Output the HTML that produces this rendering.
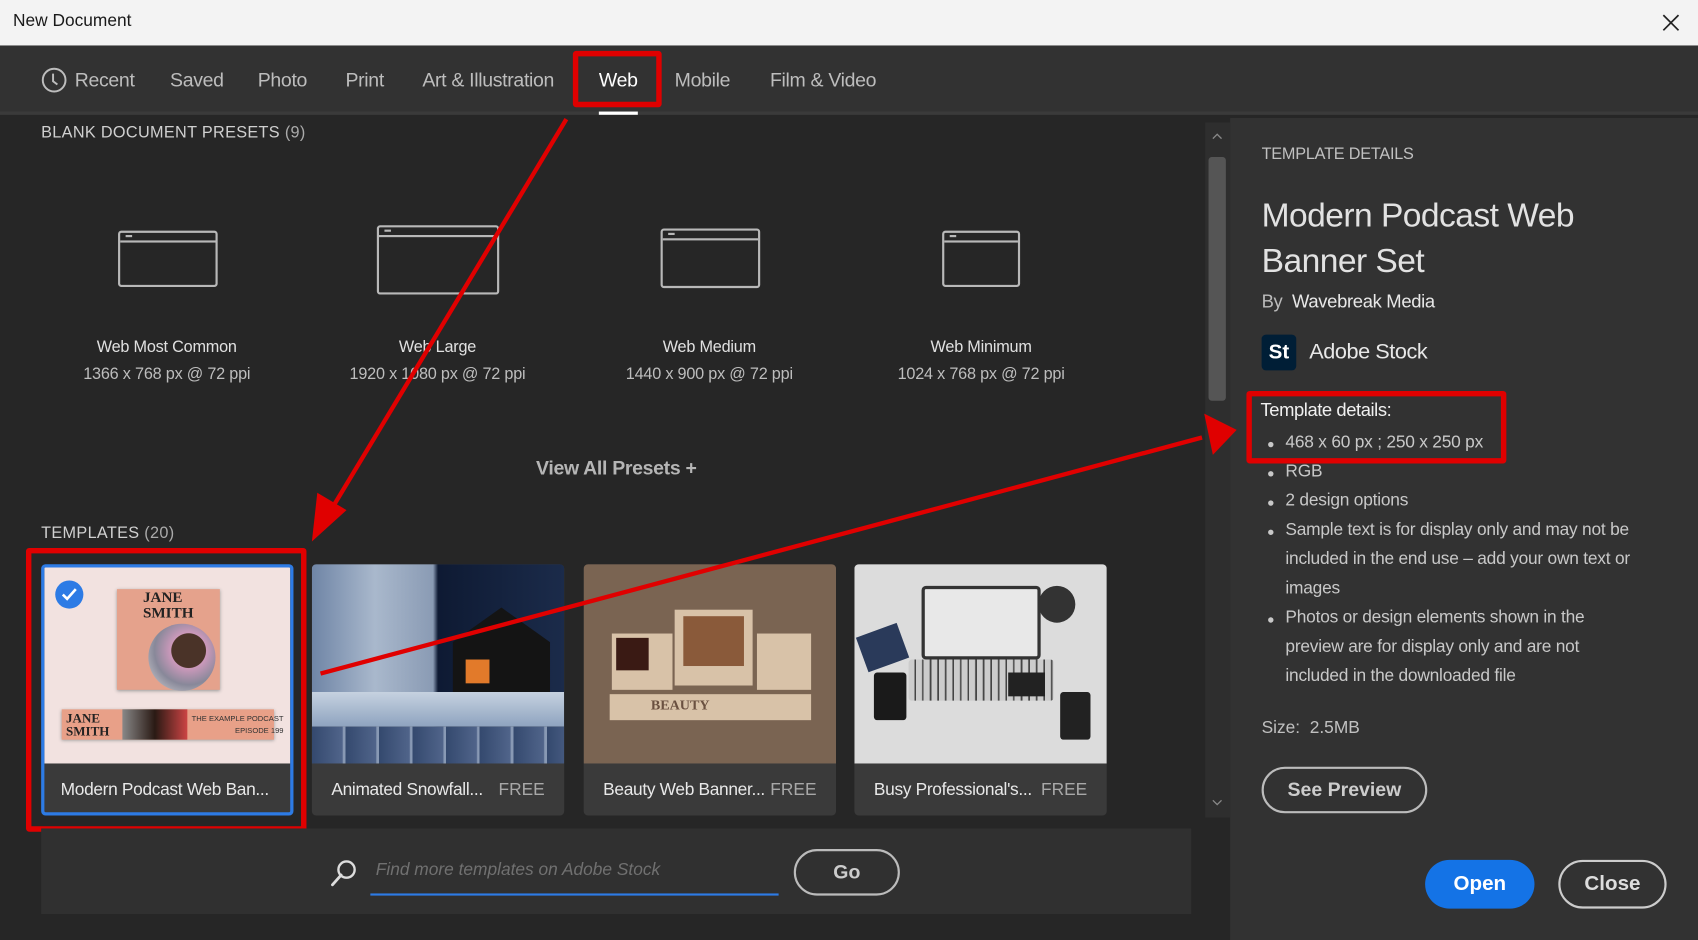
<!DOCTYPE html>
<html><head><meta charset="utf-8"><style>
*{margin:0;padding:0;box-sizing:border-box}
html,body{width:1698px;height:940px;overflow:hidden;background:#1e1e1e}
#w{position:absolute;left:0;top:0;width:1568px;height:868px;transform:scale(1.08291,1.08295);transform-origin:0 0;font-family:"Liberation Sans",sans-serif;background:#262626;overflow:hidden}
.a{position:absolute;white-space:nowrap}
.tab{position:absolute;top:64px;font-size:18px;color:#bdbdbd;letter-spacing:-0.3px}
.pn{font-size:15px;color:#e0e0e0;text-align:center;width:250px;letter-spacing:-0.2px}
.pd{font-size:15px;color:#bdbdbd;text-align:center;width:250px;letter-spacing:-0.2px}
.ico{position:absolute;border:2px solid #b8b8b8;border-radius:3px}
.ico:before{content:"";position:absolute;left:0;right:0;top:7px;border-top:2px solid #b8b8b8}
.ico:after{content:"";position:absolute;left:5px;top:2px;width:6px;border-top:2px solid #b8b8b8}
.card{position:absolute;top:521px;width:233px;height:232px;border-radius:4px;overflow:hidden;background:#3a3a3a}
.card .img{position:absolute;left:0;top:0;width:100%;height:184px;overflow:hidden}
.card .cap{position:absolute;left:18px;top:200px;font-size:16px;color:#e8e8e8;letter-spacing:-0.3px;white-space:nowrap}
.card .fr{position:absolute;right:18px;top:200px;font-size:16px;color:#a8a8a8}
.bl{position:absolute;left:1172px;font-size:16px;color:#c8c8c8;letter-spacing:-0.2px;white-space:nowrap}
.bl:before{content:"";position:absolute;left:-1px;top:8px;width:5px;height:5px;border-radius:50%;background:#c8c8c8}
.bl span{position:absolute;left:15px;top:0;white-space:nowrap}
</style></head><body><div id="w">
<!-- title -->
<div class="a" style="left:0;top:0;width:1568px;height:42px;background:#f3f3f3"></div>
<div class="a" style="left:12px;top:11px;font-size:16px;color:#1a1a1a">New Document</div>
<svg class="a" style="left:1535px;top:13px" width="16" height="16"><path d="M1 1L15 15M15 1L1 15" stroke="#222" stroke-width="1.6"/></svg>
<!-- tabs -->
<div class="a" style="left:0;top:42px;width:1568px;height:64px;background:#323232;border-bottom:3px solid #3a3a3a"></div>
<svg class="a" style="left:38px;top:62px" width="24" height="24"><circle cx="12" cy="12" r="10.5" fill="none" stroke="#bdbdbd" stroke-width="1.8"/><path d="M11 6V13L15 16" fill="none" stroke="#bdbdbd" stroke-width="1.8"/></svg>
<div class="tab" style="left:69px">Recent</div>
<div class="tab" style="left:157px">Saved</div>
<div class="tab" style="left:238px">Photo</div>
<div class="tab" style="left:319px">Print</div>
<div class="tab" style="left:390px">Art &amp; Illustration</div>
<div class="tab" style="left:553px;color:#fff">Web</div>
<div class="tab" style="left:623px">Mobile</div>
<div class="tab" style="left:711px">Film &amp; Video</div>
<div class="a" style="left:553px;top:103px;width:36px;height:3px;background:#fff"></div>
<div class="a" style="left:529px;top:47px;width:82px;height:52px;border:5px solid #e00000;border-radius:3px"></div>
<!-- left -->
<div class="a" style="left:38px;top:114px;font-size:15px;color:#d0d0d0;letter-spacing:0.3px">BLANK DOCUMENT PRESETS <span style="color:#aaa">(9)</span></div>
<div class="ico" style="left:109px;top:213px;width:92px;height:52px"></div>
<div class="ico" style="left:348px;top:208px;width:113px;height:64px"></div>
<div class="ico" style="left:610px;top:211px;width:92px;height:55px"></div>
<div class="ico" style="left:870px;top:213px;width:72px;height:52px"></div>
<div class="a pn" style="left:29px;top:312px">Web Most Common</div>
<div class="a pd" style="left:29px;top:337px">1366 x 768 px @ 72 ppi</div>
<div class="a pn" style="left:279px;top:312px">Web Large</div>
<div class="a pd" style="left:279px;top:337px">1920 x 1080 px @ 72 ppi</div>
<div class="a pn" style="left:530px;top:312px">Web Medium</div>
<div class="a pd" style="left:530px;top:337px">1440 x 900 px @ 72 ppi</div>
<div class="a pn" style="left:781px;top:312px">Web Minimum</div>
<div class="a pd" style="left:781px;top:337px">1024 x 768 px @ 72 ppi</div>
<div class="a" style="left:495px;top:422px;font-size:18px;font-weight:bold;color:#b5b5b5;letter-spacing:-0.3px">View All Presets +</div>
<div class="a" style="left:38px;top:484px;font-size:15px;color:#d0d0d0;letter-spacing:0.3px">TEMPLATES <span style="color:#aaa">(20)</span></div>
<!-- cards -->
<div class="card" style="left:38px;border:3px solid #2d7be5">
 <div class="img" style="height:181px;background:#f2e2e0">
  <div class="a" style="left:67px;top:20px;width:95px;height:93px;background:#e5a28c;box-shadow:0 1px 3px #999"></div>
  <div class="a" style="left:91px;top:22px;font:bold 14px 'Liberation Serif',serif;color:#222;line-height:14px">JANE<br>SMITH</div>
  <div class="a" style="left:96px;top:52px;width:62px;height:62px;border-radius:50%;background:radial-gradient(circle at 60% 40%,#4a3328 30%,#c9b 31%,#889 60%,#ddd)"></div>
  <div class="a" style="left:16px;top:131px;width:196px;height:28px;background:#e8a088;box-shadow:0 1px 3px #999"></div>
  <div class="a" style="left:72px;top:131px;width:60px;height:28px;background:linear-gradient(90deg,#888,#2a1a14,#c44)"></div>
  <div class="a" style="left:20px;top:133px;font:bold 12px 'Liberation Serif',serif;color:#222;line-height:12px">JANE<br>SMITH</div>
  <div class="a" style="left:136px;top:135px;font:7px 'Liberation Sans',sans-serif;color:#333;line-height:11px;text-align:right">THE EXAMPLE PODCAST<br>EPISODE 199</div>
 </div>
 <div class="a" style="left:10px;top:12px;width:26px;height:26px;border-radius:50%;background:#2d7be5"></div>
 <svg class="a" style="left:15px;top:18px" width="16" height="14"><path d="M2 7L6 11L14 2" fill="none" stroke="#fff" stroke-width="2.4"/></svg>
 <div class="cap" style="top:197px;left:15px">Modern Podcast Web Ban...</div>
</div>
<div class="card" style="left:288px">
 <div class="img" style="height:150px;background:linear-gradient(90deg,#6f85a6 0%,#a9b8cc 25%,#8a9bb4 48%,#0e1a33 50%,#1b2b4a 100%)">
  <div class="a" style="left:130px;top:40px;width:90px;height:80px;background:#141414;clip-path:polygon(0 40%,50% 0,100% 40%,100% 100%,0 100%)"></div>
  <div class="a" style="left:142px;top:88px;width:22px;height:22px;background:#e27a2a"></div>
  <div class="a" style="left:0;top:118px;width:233px;height:32px;background:linear-gradient(#c6d2e0,#8ea3bf)"></div>
 </div>
 <div class="a" style="left:0;top:150px;width:233px;height:34px;background:repeating-linear-gradient(90deg,#34496e 0,#50648a 28px,#8899b4 29px,#8899b4 31px)"></div>
 <div class="cap">Animated Snowfall...</div><div class="fr">FREE</div>
</div>
<div class="card" style="left:539px">
 <div class="img" style="background:#7a6452">
  <div class="a" style="left:26px;top:64px;width:56px;height:52px;background:#d8c2a8"></div>
  <div class="a" style="left:30px;top:68px;width:30px;height:30px;background:#3a1a14"></div>
  <div class="a" style="left:84px;top:42px;width:72px;height:70px;background:#d8c2a8"></div>
  <div class="a" style="left:92px;top:48px;width:56px;height:46px;background:#8a5a3a"></div>
  <div class="a" style="left:160px;top:64px;width:50px;height:52px;background:#d8c2a8"></div>
  <div class="a" style="left:24px;top:120px;width:186px;height:24px;background:#d8c2a8"></div>
  <div class="a" style="left:62px;top:122px;font:bold 13px 'Liberation Serif',serif;color:#6a5040">BEAUTY</div>
 </div>
 <div class="cap">Beauty Web Banner...</div><div class="fr">FREE</div>
</div>
<div class="card" style="left:789px">
 <div class="img" style="background:#dcdcdc">
  <div class="a" style="left:62px;top:20px;width:110px;height:68px;background:#e8e8e8;border:3px solid #333;border-radius:4px"></div>
  <div class="a" style="left:50px;top:88px;width:134px;height:38px;border-radius:3px;background:repeating-linear-gradient(90deg,#ccc 0,#ccc 5px,#444 6px,#444 7px)"></div>
  <div class="a" style="left:18px;top:100px;width:30px;height:44px;background:#1a1a1a;border-radius:3px"></div>
  <div class="a" style="left:6px;top:60px;width:40px;height:34px;background:#2a3a5a;transform:rotate(-20deg)"></div>
  <div class="a" style="left:142px;top:100px;width:34px;height:22px;background:#222"></div>
  <div class="a" style="left:190px;top:118px;width:28px;height:44px;background:#222;border-radius:3px"></div>
  <div class="a" style="left:170px;top:20px;width:34px;height:34px;border-radius:50%;background:#333"></div>
 </div>
 <div class="cap">Busy Professional's...</div><div class="fr">FREE</div>
</div>
<div class="a" style="left:24px;top:506px;width:259px;height:262px;border:5px solid #e00000;border-radius:3px"></div>
<!-- scrollbar -->
<div class="a" style="left:1113px;top:113px;width:23px;height:642px;background:#2e2e2e"></div>
<div class="a" style="left:1116px;top:145px;width:16px;height:225px;background:#555;border-radius:3px"></div>
<svg class="a" style="left:1119px;top:122px" width="10" height="8"><path d="M1 6L5 2L9 6" fill="none" stroke="#888" stroke-width="1.2"/></svg>
<svg class="a" style="left:1119px;top:737px" width="10" height="8"><path d="M1 2L5 6L9 2" fill="none" stroke="#888" stroke-width="1.2"/></svg>
<!-- search -->
<div class="a" style="left:38px;top:765px;width:1062px;height:79px;background:#303030"></div>
<svg class="a" style="left:304px;top:792px" width="28" height="28"><circle cx="16" cy="11" r="7.5" fill="none" stroke="#ddd" stroke-width="2.2"/><path d="M11 16L3 25" stroke="#ddd" stroke-width="2.6" stroke-linecap="round"/></svg>
<div class="a" style="left:347px;top:795px;font-size:16px;font-style:italic;color:#707070">Find more templates on Adobe Stock</div>
<div class="a" style="left:342px;top:825px;width:377px;height:2px;background:#2d7be5"></div>
<div class="a" style="left:733px;top:784px;width:98px;height:43px;border:2px solid #bbb;border-radius:22px;font-size:18px;font-weight:bold;color:#ccc;text-align:center;line-height:39px">Go</div>
<!-- right -->
<div class="a" style="left:1136px;top:109px;width:432px;height:759px;background:#323232"></div>
<div class="a" style="left:1165px;top:134px;font-size:15px;color:#c0c0c0;letter-spacing:-0.2px">TEMPLATE DETAILS</div>
<div class="a" style="left:1165px;top:178px;font-size:31px;color:#e2e2e2;line-height:42px;letter-spacing:-0.5px">Modern Podcast Web<br>Banner Set</div>
<div class="a" style="left:1165px;top:269px;font-size:17px;color:#bbb;letter-spacing:-0.3px">By&nbsp; <span style="color:#e8e8e8">Wavebreak Media</span></div>
<div class="a" style="left:1165px;top:309px;width:32px;height:33px;background:#001e36;border-radius:4px;color:#fff;font-weight:bold;font-size:19px;text-align:center;line-height:33px">St</div>
<div class="a" style="left:1209px;top:314px;font-size:20px;color:#e8e8e8;letter-spacing:-0.4px">Adobe Stock</div>
<div class="a" style="left:1164px;top:369px;font-size:17px;color:#f0f0f0;letter-spacing:-0.4px">Template details:</div>
<div class="bl" style="top:400px"><span>468 x 60 px ; 250 x 250 px</span></div>
<div class="bl" style="top:427px"><span>RGB</span></div>
<div class="bl" style="top:454px"><span>2 design options</span></div>
<div class="bl" style="top:481px"><span style="line-height:27px;top:-5px">Sample text is for display only and may not be<br>included in the end use – add your own text or<br>images</span></div>
<div class="bl" style="top:562px"><span style="line-height:27px;top:-5px">Photos or design elements shown in the<br>preview are for display only and are not<br>included in the downloaded file</span></div>
<div class="a" style="left:1165px;top:664px;font-size:16px;color:#c0c0c0">Size:&nbsp; 2.5MB</div>
<div class="a" style="left:1151px;top:361px;width:240px;height:67px;border:5px solid #e00000;border-radius:3px"></div>
<div class="a" style="left:1165px;top:708px;width:153px;height:43px;border:2px solid #bbb;border-radius:22px;font-size:18px;font-weight:bold;color:#ccc;text-align:center;line-height:39px">See Preview</div>
<div class="a" style="left:1316px;top:794px;width:101px;height:45px;background:#1473e6;border-radius:23px;font-size:19px;font-weight:bold;color:#fff;text-align:center;line-height:45px">Open</div>
<div class="a" style="left:1439px;top:794px;width:100px;height:45px;border:2px solid #ccc;border-radius:23px;font-size:19px;font-weight:bold;color:#ddd;text-align:center;line-height:41px">Close</div>
<!-- arrows -->
<svg class="a" style="left:0;top:0" width="1568" height="868">
<path d="M523 110L305 472" stroke="#e00000" stroke-width="4"/>
<polygon points="288,500 293,455 320,471" fill="#e00000"/>
<path d="M296 622L1110 404" stroke="#e00000" stroke-width="4"/>
<polygon points="1142,397 1112,382 1120,420" fill="#e00000"/>
</svg>
</div></body></html>
